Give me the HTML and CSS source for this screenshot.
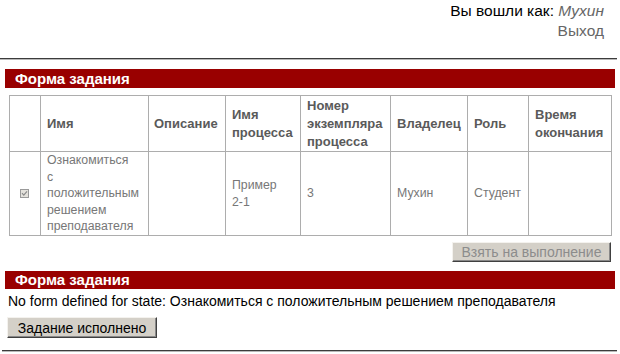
FILE: index.html
```html
<!DOCTYPE html>
<html lang="ru">
<head>
<meta charset="utf-8">
<title>Форма задания</title>
<link rel="stylesheet" href="styles.css">
</head>
<body>
<div class="userbar">
  <div class="who">Вы вошли как: <span class="uname">Мухин</span></div>
  <div class="logout">Выход</div>
</div>
<div class="rule"></div>

<div class="section-title">Форма задания</div>
<table class="tasks">
  <colgroup>
    <col class="c-check"><col class="c-name"><col class="c-desc"><col class="c-proc">
    <col class="c-num"><col class="c-owner"><col class="c-role"><col class="c-end">
  </colgroup>
  <thead>
    <tr>
      <th></th>
      <th>Имя</th>
      <th class="th-desc">Описание</th>
      <th>Имя процесса</th>
      <th>Номер экземпляра процесса</th>
      <th>Владелец</th>
      <th>Роль</th>
      <th>Время окончания</th>
    </tr>
  </thead>
  <tbody>
    <tr>
      <td class="check-cell"><span class="check"><svg width="9" height="9" viewBox="0 0 9 9"><rect x="0.5" y="0.5" width="8" height="8" fill="#e4e2dc" stroke="#9a9a9a"/><path d="M2 4.2 L3.8 6.2 L7 2.4" fill="none" stroke="#8a8a8a" stroke-width="1.2"/></svg></span></td>
      <td class="task-name">Ознакомиться с положительным решением преподавателя</td>
      <td></td>
      <td>Пример <span class="nowrap">2-1</span></td>
      <td>3</td>
      <td>Мухин</td>
      <td>Студент</td>
      <td></td>
    </tr>
  </tbody>
</table>
<div class="actions">
  <button class="btn btn-disabled" disabled>Взять на выполнение</button>
</div>

<div class="section-title second">Форма задания</div>
<div class="message">No form defined for state: Ознакомиться с положительным решением преподавателя</div>
<div class="done-row">
  <button class="btn btn-active">Задание исполнено</button>
</div>
<div class="rule bottom"></div>
</body>
</html>
```
FILE: styles.css
```css
html, body {
  margin: 0;
  padding: 0;
  background: #fff;
}
body {
  font-family: "Liberation Sans", Arial, sans-serif;
  font-size: 14px;
  color: #000;
  width: 620px;
}
.userbar {
  text-align: right;
  padding: 1px 16px 0 0;
  line-height: 20px;
  font-size: 15.5px;
}
.uname {
  font-style: italic;
  color: #666;
}
.logout {
  color: #666;
}
.rule {
  margin: 17px 3px 0 0;
  height: 0;
  border-top: 1px solid #3c3c3c;
  border-bottom: 1px solid #b8b8b8;
}
.rule.bottom {
  margin: 12px 3px 0 2px;
}
.section-title {
  margin: 9px 5px 0 5px;
  height: 19px;
  line-height: 19px;
  background: #990000;
  color: #fff;
  font-weight: bold;
  font-size: 15px;
  padding-left: 10px;
}
.section-title.second {
  margin-top: 9px;
  height: 18px;
  line-height: 18px;
}
.tasks {
  margin: 7px 0 0 9px;
  border-collapse: collapse;
  table-layout: fixed;
  width: 603px;
  font-size: 13px;
}
.c-check { width: 31px; }
.c-name { width: 108px; }
.c-desc { width: 77px; }
.c-proc { width: 75px; }
.c-num { width: 90px; }
.c-owner { width: 77px; }
.c-role { width: 61px; }
.c-end { width: 83px; }
.tasks th, .tasks td {
  border: 1px solid #adadad;
  text-align: left;
  vertical-align: middle;
  padding: 0 5px 0 6px;
}
.tasks th {
  font-weight: bold;
  color: #5a5a5a;
  height: 55px;
  line-height: 18px;
}
.tasks th.th-desc {
  padding-left: 5px;
}
.tasks td {
  color: #777;
  height: 83px;
  line-height: 16.5px;
  font-size: 12.3px;
  padding-right: 8px;
}
.tasks td.task-name {
  word-spacing: 6px;
}
.nowrap {
  white-space: nowrap;
}
.tasks td.check-cell {
  padding: 0 0 0 10px;
}
.check {
  display: block;
  width: 9px;
  height: 9px;
  margin-top: -1px;
}
.check svg {
  display: block;
}
.actions {
  display: flex;
  justify-content: flex-end;
  padding-right: 9px;
  margin-top: 6px;
}
.btn {
  font-family: "Liberation Sans", Arial, sans-serif;
  font-size: 14px;
  background: #d4d0c8;
  border-style: solid;
  border-width: 1px;
  border-color: #f4f2ee #404040 #404040 #f4f2ee;
  box-shadow: inset -1px -1px 0 #888;
  padding: 0;
  margin: 0;
  height: 20px;
  line-height: 18px;
  white-space: nowrap;
  text-align: center;
}
.btn-disabled {
  width: 159px;
  color: #8c8c8c;
}
.message {
  margin: 4px 0 0 8px;
  line-height: 16px;
}
.done-row {
  margin: 8px 0 0 7px;
}
.btn-active {
  width: 150px;
  height: 21px;
  color: #000;
}
```
